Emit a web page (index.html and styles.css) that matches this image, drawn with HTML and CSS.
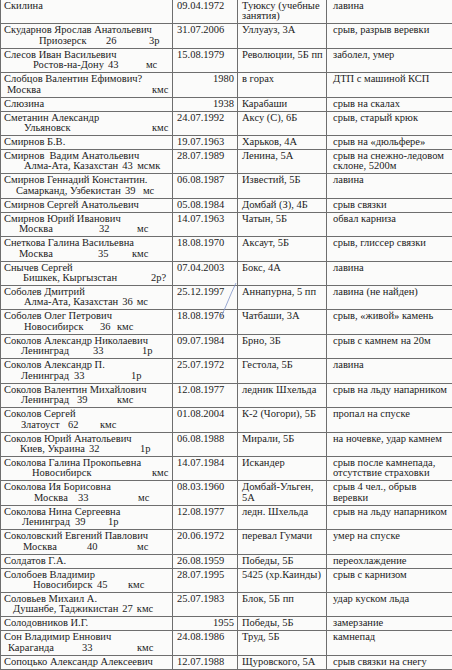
FILE: index.html
```html
<!DOCTYPE html>
<html lang="ru">
<head>
<meta charset="utf-8">
<title>Список</title>
<link rel="stylesheet" href="styles.css">
</head>
<body>
<div class="page">
<table class="list">
<colgroup><col class="c1"><col class="c2"><col class="c3"><col class="c4"></colgroup>
<tbody>
<tr><td>Скилина</td><td>09.04.1972</td><td>Туюксу (учебные<br>занятия)</td><td class="d">лавина</td></tr>
<tr><td>Скударнов Ярослав Анатольевич<div class="sub" style="--i:35px;--w1:67px;--w2:43px"><span class="s1">Приозерск</span><span class="s2">26</span><span>3р</span></div></td><td>31.07.2006</td><td>Уллуауз, 3А</td><td class="d">срыв, разрыв веревки</td></tr>
<tr><td>Слесов Иван Васильевич<div class="sub" style="--i:29px;--w1:69px;--w2:38px"><span class="s1">Ростов-на-Дону</span><span class="s2">43</span><span>мс</span></div></td><td>15.08.1979</td><td>Революции, 5Б пп</td><td class="d">заболел, умер</td></tr>
<tr><td>Слобцов Валентин Ефимович?<div class="sub" style="--i:3px;--w1:145px"><span class="s1">Москва</span><span>кмс</span></div></td><td class="y">1980</td><td>в горах</td><td class="d">ДТП с машиной КСП</td></tr>
<tr><td>Слюзина</td><td class="y">1938</td><td>Карабаши</td><td class="d">срыв на скалах</td></tr>
<tr><td>Сметанин Александр<div class="sub" style="--i:20px;--w1:128px"><span class="s1">Ульяновск</span><span>кмс</span></div></td><td>24.07.1992</td><td>Аксу (С), 6Б</td><td class="d">срыв, старый крюк</td></tr>
<tr><td>Смирнов Б.В.</td><td>19.07.1963</td><td>Харьков, 4А</td><td class="d">срыв на «дюльфере»</td></tr>
<tr><td>Смирнов&nbsp; Вадим Анатольевич<div class="sub" style="--i:20px;--w1:76px;--w2:15px"><span class="s1">Алма-Ата, Казахстан</span><span class="s2">43</span><span>мсмк</span></div></td><td>28.07.1989</td><td>Ленина, 5А</td><td class="d">срыв на снежно-ледовом<br>склоне, 5200м</td></tr>
<tr><td>Смирнов Геннадий Константин.<div class="sub" style="--i:12px;--w1:87px;--w2:18px"><span class="s1">Самарканд, Узбекистан</span><span class="s2">39</span><span>мс</span></div></td><td>06.08.1987</td><td>Известий, 5Б</td><td class="d">лавина</td></tr>
<tr><td>Смирнов Сергей Анатольевич</td><td>05.08.1984</td><td>Домбай (З), 4Б</td><td class="d">срыв связки</td></tr>
<tr><td>Смирнов Юрий Иванович<div class="sub" style="--i:15px;--w1:80px;--w2:38px"><span class="s1">Москва</span><span class="s2">32</span><span>мс</span></div></td><td>14.07.1963</td><td>Чатын, 5Б</td><td class="d">обвал карниза</td></tr>
<tr><td>Снеткова Галина Васильевна<div class="sub" style="--i:15px;--w1:79px;--w2:34px"><span class="s1">Москва</span><span class="s2">35</span><span>кмс</span></div></td><td>18.08.1970</td><td>Аксаут, 5Б</td><td class="d">срыв, глиссер связки</td></tr>
<tr><td>Снычев Сергей<div class="sub" style="--i:19px;--w1:128px"><span class="s1">Бишкек, Кыргызстан</span><span>2р?</span></div></td><td>07.04.2003</td><td>Бокс, 4А</td><td class="d">лавина</td></tr>
<tr><td>Соболев Дмитрий<div class="sub" style="--i:20px;--w1:76px;--w2:13px"><span class="s1">Алма-Ата, Казахстан</span><span class="s2">36</span><span>мс</span></div></td><td>25.12.1997</td><td>Аннапурна, 5 пп</td><td class="d">лавина (не найден)</td></tr>
<tr><td>Соболев Олег Петрович<div class="sub" style="--i:20px;--w1:76px;--w2:17px"><span class="s1">Новосибирск</span><span class="s2">36</span><span>кмс</span></div></td><td>18.08.1976</td><td>Чатбаши, 3А</td><td class="d">срыв, «живой» камень</td></tr>
<tr><td>Соколов Александр Николаевич<div class="sub" style="--i:17px;--w1:72px;--w2:49px"><span class="s1">Ленинград</span><span class="s2">33</span><span>1р</span></div></td><td>09.07.1984</td><td>Брно, 3Б</td><td class="d">срыв с камнем на 20м</td></tr>
<tr><td>Соколов Александр П.<div class="sub" style="--i:17px;--w1:53px;--w2:57px"><span class="s1">Ленинград</span><span class="s2">33</span><span>1р</span></div></td><td>25.07.1972</td><td>Гестола, 5Б</td><td class="d">лавина</td></tr>
<tr><td>Соколов Валентин Михайлович<div class="sub" style="--i:17px;--w1:56px;--w2:40px"><span class="s1">Ленинград</span><span class="s2">39</span><span>кмс</span></div></td><td>12.08.1977</td><td>ледник Шхельда</td><td class="d">срыв на льду напарником</td></tr>
<tr><td>Соколов Сергей<div class="sub" style="--i:17px;--w1:47px;--w2:32px"><span class="s1">Златоуст</span><span class="s2">62</span><span>кмс</span></div></td><td>01.08.2004</td><td>К-2 (Чогори), 5Б</td><td class="d">пропал на спуске</td></tr>
<tr><td>Соколов Юрий Анатольевич<div class="sub" style="--i:16px;--w1:66px;--w2:51px"><span class="s1">Киев, Украина</span><span class="s2">32</span><span>1р</span></div></td><td>06.08.1988</td><td>Мирали, 5Б</td><td class="d">на ночевке, удар камнем</td></tr>
<tr><td>Соколова Галина Прокопьевна<div class="sub" style="--i:28px;--w1:120px"><span class="s1">Новосибирск</span><span>кмс</span></div></td><td>14.07.1984</td><td>Искандер</td><td class="d">срыв после камнепада,<br>отсутствие страховки</td></tr>
<tr><td>Соколова Ия Борисовна<div class="sub" style="--i:30px;--w1:44px;--w2:60px"><span class="s1">Москва</span><span class="s2">33</span><span>мс</span></div></td><td>08.03.1960</td><td>Домбай-Ульген,<br>5А</td><td class="d">срыв 4 чел., обрыв<br>веревки</td></tr>
<tr><td>Соколова Нина Сергеевна<div class="sub" style="--i:18px;--w1:53px;--w2:33px"><span class="s1">Ленинград</span><span class="s2">39</span><span>1р</span></div></td><td>12.08.1977</td><td>ледн. Шхельда</td><td class="d">срыв на льду напарником</td></tr>
<tr><td>Соколовский Евгений Павлович<div class="sub" style="--i:19px;--w1:64px;--w2:50px"><span class="s1">Москва</span><span class="s2">40</span><span>мс</span></div></td><td>20.06.1972</td><td>перевал Гумачи</td><td class="d">умер на спуске</td></tr>
<tr><td>Солдатов Г.А.</td><td>26.08.1959</td><td>Победы, 5Б</td><td class="d">переохлаждение</td></tr>
<tr><td>Солобоев Владимир<div class="sub" style="--i:29px;--w1:64px;--w2:31px"><span class="s1">Новосибирск</span><span class="s2">45</span><span>кмс</span></div></td><td>28.07.1995</td><td>5425 (хр.Каинды)</td><td class="d">срыв с карнизом</td></tr>
<tr><td>Соловьев Михаил А.<div class="sub" style="--i:9px;--w1:90px;--w2:12px"><span class="s1">Душанбе, Таджикистан</span><span class="s2">27</span><span>кмс</span></div></td><td>25.07.1983</td><td>Блок, 5Б пп</td><td class="d">удар куском льда</td></tr>
<tr><td>Солодовников И.Г.</td><td class="y">1955</td><td>Победы, 5Б</td><td class="d">замерзание</td></tr>
<tr><td>Сон Владимир Еннович<div class="sub" style="--i:4px;--w1:74px;--w2:55px"><span class="s1">Караганда</span><span class="s2">33</span><span>кмс</span></div></td><td>24.08.1986</td><td>Труд, 5Б</td><td class="d">камнепад</td></tr>
<tr><td>Сопоцько Александр Алексеевич</td><td>12.07.1988</td><td>Щуровского, 5А</td><td class="d">срыв связки на снегу</td></tr>
</tbody>
</table>
<svg class="pen" width="40" height="50" viewBox="0 0 40 50" aria-hidden="true"><path d="M36 2 C30 14, 26 26, 20 38" stroke="#7f93c8" stroke-width="0.8" fill="none"/></svg>
</div>
</body>
</html>
```

FILE: styles.css
```css
html, body {
  margin: 0;
  padding: 0;
  background: #fbfbfa;
}
body {
  width: 452px;
  height: 670px;
  overflow: hidden;
}
.page {
  position: relative;
}
.list {
  border-collapse: collapse;
  table-layout: fixed;
  width: 462px;
  margin-top: -1px;
  font-family: "Liberation Serif", "Times New Roman", serif;
  font-size: 10.5px;
  line-height: 10.4px;
  color: #1c1c1c;
}
.c1 { width: 172px; }
.c2 { width: 65px; }
.c3 { width: 89px; }
.c4 { width: 136px; }
.list td {
  border: 1px solid #6e6e6e;
  padding: 1px 3px 1.6px 4px;
  vertical-align: top;
  white-space: nowrap;
  overflow: visible;
}
.list td:first-child { padding-left: 3px; }
.list td.y { text-align: right; }
.list td.d { padding-left: 6px; }
.sub {
  padding-left: var(--i);
  white-space: nowrap;
}
.sub span { display: inline-block; }
.sub .s1,
.sub .s2 {
  box-sizing: border-box;
  padding-right: 4px;
}
.sub .s1 { min-width: var(--w1); }
.sub .s2 { min-width: var(--w2); }
.pen {
  position: absolute;
  left: 200px;
  top: 282px;
}
```
